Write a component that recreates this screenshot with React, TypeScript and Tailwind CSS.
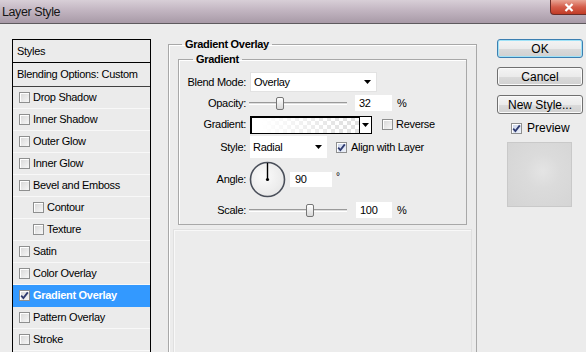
import type { ReactNode } from 'react'

function Checkbox({ checked = false, blue = false }: { checked?: boolean; blue?: boolean }) {
  return (
    <div
      className={
        'w-[11px] h-[11px] shrink-0 border border-[#8e8f8f] flex items-center justify-center shadow-[inset_1px_1px_0_#ffffff] ' +
        (blue
          ? 'bg-[linear-gradient(135deg,#c9d3ea,#eef2fa)]'
          : 'bg-[linear-gradient(135deg,#d6d6d6,#f7f7f7)]')
      }
    >
      {checked && (
        <svg width="9" height="9" viewBox="0 0 9 9">
          <path d="M1.2 4.6 L3.4 7 L7.8 1.4" fill="none" stroke="#2f3b70" strokeWidth="1.8" />
        </svg>
      )}
    </div>
  )
}

function Arrow() {
  return (
    <svg width="7" height="4" viewBox="0 0 7 4">
      <polygon points="0,0 7,0 3.5,4" fill="#000" />
    </svg>
  )
}

function StyleRow({ label, checked = false, indent = false, active = false }: { label: string; checked?: boolean; indent?: boolean; active?: boolean }) {
  return (
    <div
      className={
        'h-[22px] flex items-center gap-[3px] border-b ' +
        (indent ? 'pl-[20px] ' : 'pl-[6px] ') +
        (active ? 'bg-[#3399ff] border-[#3399ff] text-white font-bold' : 'border-[#f8f8f8]')
      }
    >
      <Checkbox checked={checked} />
      <span>{label}</span>
    </div>
  )
}

function Slider({ thumb }: { thumb: number }) {
  return (
    <div className="relative ml-[3px] w-[98px] h-[3px] border-t border-[#9a9a9a] border-b border-b-white bg-[#dedede]">
      <div
        className="absolute top-[-6px] w-[8px] h-[13px] rounded-[2px] border border-[#767676] bg-[linear-gradient(#ffffff,#d8d8d8)]"
        style={{ left: thumb }}
      />
    </div>
  )
}

function Field({ label, children, h, mt }: { label: string; children: ReactNode; h: string; mt: string }) {
  return (
    <div className={'flex items-center ' + h + ' ' + mt}>
      <div className="w-[67px] text-right shrink-0">{label}</div>
      {children}
    </div>
  )
}

function Button({ children, primary = false }: { children: ReactNode; primary?: boolean }) {
  return (
    <div
      className={
        'w-[86px] h-[19px] rounded-[3px] flex items-center justify-center text-[12px] bg-[linear-gradient(#f4f4f4_0%,#ebebeb_50%,#dbdbdb_51%,#d0d0d0_100%)] ' +
        (primary ? 'border border-[#3c7fb1] shadow-[inset_0_0_0_1px_#9fe2f7]' : 'border border-[#707070] shadow-[inset_0_0_0_1px_#fafafa]')
      }
    >
      {children}
    </div>
  )
}

export default function App() {
  return (
    <div className="w-[586px] h-[352px] overflow-hidden bg-[#ececec] text-black text-[11px] tracking-[-0.3px] [font-family:'Liberation_Sans',Arial,sans-serif]">

      {/* Title bar */}
      <div className="h-[24px] flex items-start justify-between border-b border-[#5e5a5e] bg-[linear-gradient(180deg,#d8cfd7_0%,#c2b5c1_45%,#a89aa7_100%)]">
        <span className="pl-[2px] pt-[3px] text-[12.5px] tracking-[-0.4px] text-[#151515]">Layer Style</span>
        <div className="w-[38px] h-[15px] mr-[-2px] rounded-bl-[4px] border border-t-0 border-[#6b2d28] bg-[linear-gradient(#e9a595,#d45d4a_50%,#c13b26)] flex items-center justify-center">
          <svg width="10" height="9" viewBox="0 0 10 9">
            <path d="M1.5 1 L8.5 8 M8.5 1 L1.5 8" stroke="#ffffff" strokeWidth="2.2" />
          </svg>
        </div>
      </div>

      <div className="flex items-start">

        {/* Styles list */}
        <div className="ml-[12px] mt-[15px] w-[139px] h-[320px] border border-black bg-[#ebebeb]">
          <div className="h-[23px] flex items-center pl-[4px] border-b border-black">Styles</div>
          <div className="h-[24px] flex items-center pl-[4px] border-b border-[#404040]">Blending Options: Custom</div>
          <StyleRow label="Drop Shadow" />
          <StyleRow label="Inner Shadow" />
          <StyleRow label="Outer Glow" />
          <StyleRow label="Inner Glow" />
          <StyleRow label="Bevel and Emboss" />
          <StyleRow label="Contour" indent />
          <StyleRow label="Texture" indent />
          <StyleRow label="Satin" />
          <StyleRow label="Color Overlay" />
          <StyleRow label="Gradient Overlay" checked active />
          <StyleRow label="Pattern Overlay" />
          <StyleRow label="Stroke" />
        </div>

        {/* Gradient Overlay group */}
        <fieldset className="ml-[17px] mt-[13px] w-[309px] h-[340px] border border-[#a8a8a8] shadow-[inset_1px_1px_0_#ffffff]">
          <legend className="ml-[13px] px-[3px] font-bold leading-[14px]">Gradient Overlay</legend>

          <fieldset className="ml-[9px] mt-[1px] w-[289px] h-[173px] border border-[#a8a8a8] shadow-[inset_1px_1px_0_#ffffff]">
            <legend className="ml-[14px] px-[3px] font-bold leading-[14px]">Gradient</legend>

            <div className="flex flex-col">
              <Field label="Blend Mode:" h="h-[20px]" mt="mt-[6px]">
                <div className="ml-[4px] w-[127px] h-[20px] bg-white border border-[#e2e2e2] flex items-center justify-between pl-[3px] pr-[5px]">
                  <span>Overlay</span>
                  <Arrow />
                </div>
              </Field>

              <Field label="Opacity:" h="h-[18px]" mt="mt-[2px]">
                <Slider thumb={27} />
                <div className="ml-[8px] w-[37px] h-[16px] bg-white flex items-center pl-[4px]">32</div>
                <span className="ml-[5px]">%</span>
              </Field>

              <Field label="Gradient:" h="h-[19px]" mt="mt-[3px]">
                <div className="ml-[4px] w-[110px] h-[18px] border border-black shadow-[inset_1px_1px_0_#000] [background-image:linear-gradient(to_right,#ffffff_10%,rgba(255,255,255,0)_85%),repeating-conic-gradient(#e2e2e2_0%_25%,#ffffff_0%_50%)] [background-size:100%_100%,8px_8px]" />
                <div className="w-[12px] h-[18px] border border-l-0 border-black bg-white flex items-center justify-center">
                  <Arrow />
                </div>
                <div className="ml-[10px]"><Checkbox /></div>
                <span className="ml-[3px]">Reverse</span>
              </Field>

              <Field label="Style:" h="h-[22px]" mt="mt-[2px]">
                <div className="ml-[4px] w-[77px] h-[22px] bg-white flex items-center justify-between pl-[3px] pr-[5px]">
                  <span>Radial</span>
                  <Arrow />
                </div>
                <div className="ml-[9px]"><Checkbox checked blue /></div>
                <span className="ml-[4px]">Align with Layer</span>
              </Field>

              <Field label="Angle:" h="h-[37px]" mt="mt-[3px]">
                <svg className="ml-[3px]" width="37" height="37" viewBox="0 0 37 37">
                  <defs>
                    <radialGradient id="dial" cx="0.4" cy="0.4" r="0.7">
                      <stop offset="0" stopColor="#fbfbfb" />
                      <stop offset="1" stopColor="#e6e6e6" />
                    </radialGradient>
                  </defs>
                  <circle cx="18.5" cy="18.5" r="17" fill="url(#dial)" stroke="#4a4f5a" strokeWidth="1.6" />
                  <line x1="18.5" y1="18.5" x2="18.5" y2="2" stroke="#000" strokeWidth="1.4" />
                  <circle cx="18.5" cy="18.5" r="1.6" fill="#000" />
                </svg>
                <div className="ml-[4px] w-[42px] h-[15px] bg-white flex items-center pl-[5px]">90</div>
                <span className="ml-[4px] mb-[6px] text-[10px]">°</span>
              </Field>

              <Field label="Scale:" h="h-[18px]" mt="mt-[3px]">
                <Slider thumb={57} />
                <div className="ml-[9px] w-[36px] h-[16px] bg-white flex items-center pl-[4px]">100</div>
                <span className="ml-[5px]">%</span>
              </Field>
            </div>
          </fieldset>

          <div className="mt-[4px] mx-[4px] h-[140px] border border-b-0 border-[#e0e0e0] shadow-[inset_1px_1px_0_#f8f8f8]" />
        </fieldset>

        {/* Buttons */}
        <div className="ml-[20px] mt-[15px] flex flex-col">
          <div className="flex flex-col gap-[9px] tracking-normal">
            <Button primary>OK</Button>
            <Button>Cancel</Button>
            <Button>New Style...</Button>
          </div>
          <div className="mt-[6px] h-[16px] flex items-center pl-[14px] gap-[5px] text-[12px] tracking-normal">
            <Checkbox checked blue />
            <span>Preview</span>
          </div>
          <div className="mt-[6px] ml-[10px] w-[65px] h-[65px] border border-[#c9c9c9] bg-[radial-gradient(circle_at_55%_45%,#e4e4e4_0%,#dbdbdb_35%,#d4d4d4_100%)]" />
        </div>
      </div>
    </div>
  )
}
